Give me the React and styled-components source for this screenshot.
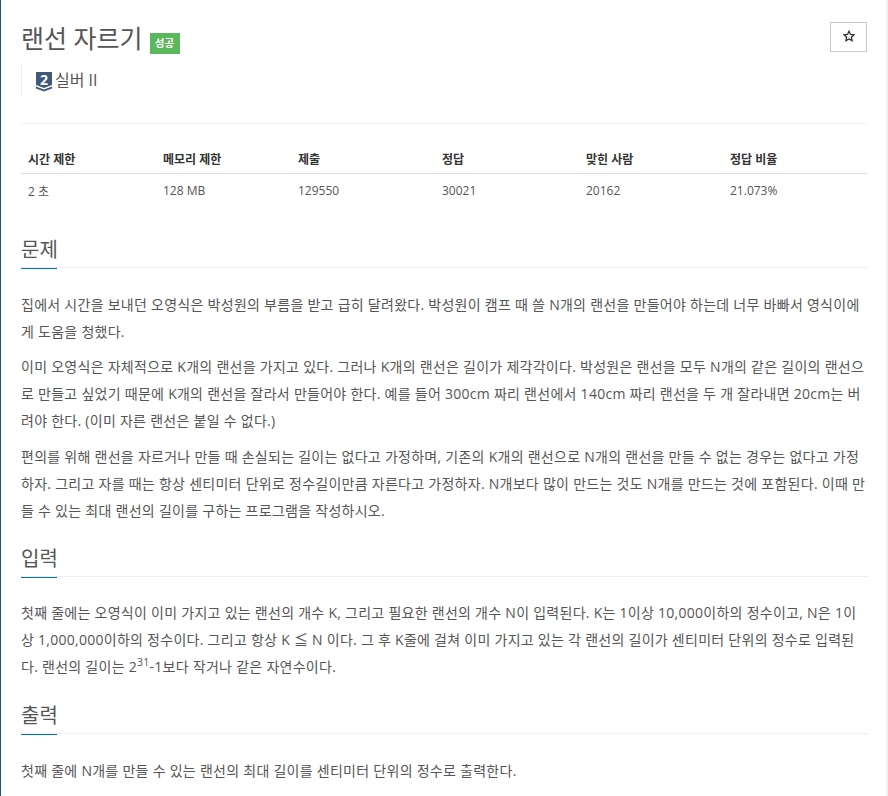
import React from 'react';
import styled, { createGlobalStyle } from 'styled-components';

const GlobalStyle = createGlobalStyle`
    html, body {
        margin: 0;
        padding: 0;
        background: #fff;
    }
    body {
        font-family: "Open Sans", "Noto Sans CJK KR", sans-serif;
        font-size: 14px;
        color: #555;
    }
`;

const Page = styled('div')`
    box-sizing: border-box;
    width: 888px;
    height: 796px;
    overflow: hidden;
    border-left: 1px solid #1a5a78;
    border-right: 2px solid #f1f1f1;
    padding: 0 19px 0 20px;
`;

const TitleRow = styled('div')`
    display: flex;
    justify-content: space-between;
    align-items: flex-start;
    padding-top: 22px;
`;

const TitleGroup = styled('div')`
    display: flex;
    align-items: flex-end;
`;

const Title = styled('h1')`
    margin: 0;
    font-size: 25px;
    line-height: 32px;
    font-weight: 400;
    color: #555;
`;

const Badge = styled('span')`
    display: block;
    width: 30px;
    height: 21px;
    margin: 0 0 0 7px;
    background: #5cb85c;
    color: #fff;
    font-size: 10.5px;
    font-weight: 700;
    line-height: 21px;
    text-align: center;
`;

const StarButton = styled('button')`
    box-sizing: border-box;
    display: flex;
    align-items: center;
    justify-content: center;
    width: 37px;
    height: 30px;
    padding: 0 0 2px;
    background: #fff;
    border: 1px solid #c9c9c9;
`;

const Tier = styled('div')`
    display: flex;
    align-items: center;
    gap: 3px;
    height: 34px;
    margin-top: 9px;
    padding-left: 14px;
    border-left: 1px solid #eee;
    font-size: 16px;
    line-height: 32px;
    color: #555;
    svg {
        margin-top: 3px;
    }
`;

const Divider = styled('hr')`
    margin: 26px 0 0;
    border: 0;
    border-top: 1px solid #eee;
`;

const Table = styled('table')`
    width: 100%;
    margin-top: 22px;
    border-collapse: collapse;
    table-layout: fixed;
    font-size: 12px;
    color: #555;
`;

const HeadCell = styled('th')`
    box-sizing: border-box;
    width: ${(props) => props.$width}px;
    height: 27px;
    padding: 0 7px;
    border-bottom: 1px solid #ddd;
    text-align: left;
    font-weight: 700;
    color: #333;
`;

const Cell = styled('td')`
    height: 34px;
    padding: 0 7px;
`;

const Section = styled('section')`
    margin-top: ${(props) => props.$top}px;
`;

const Heading = styled('h2')`
    position: relative;
    margin: 0;
    height: 31px;
    font-size: 20px;
    line-height: 28px;
    font-weight: 400;
    color: #555;
    border-bottom: 1px dotted #e0e0e0;
    &::after {
        content: '';
        position: absolute;
        left: 0;
        bottom: -2px;
        width: 36px;
        height: 1px;
        background: #0076c0;
    }
`;

const Body = styled('div')`
    padding-top: ${(props) => props.$top}px;
`;

const Paragraph = styled('p')`
    margin: 0;
    font-size: 14px;
    letter-spacing: 0.27px;
    line-height: 27px;
    color: #555;
    & + & {
        margin-top: 8.5px;
    }
`;

const Sup = styled('sup')`
    font-size: 10.5px;
    line-height: 0;
`;

const StarIcon = () => (
    <svg width="12" height="12" viewBox="0 0 24 24" fill="none" stroke="#333" strokeWidth="2.6" strokeLinejoin="miter">
        <path d="M12 2.5l2.9 6.4 6.9.8-5.1 4.7 1.4 6.9-6.1-3.5-6.1 3.5 1.4-6.9-5.1-4.7 6.9-.8z" />
    </svg>
);

const TierIcon = () => (
    <svg width="16" height="20" viewBox="0 0 16 20" overflow="visible">
        <path d="M0 0h16v13l-8 3-8-3z" fill="#3f5a78" />
        <path d="M0 14.5l8 3 8-3v2l-8 3-8-3z" fill="#3f5a78" />
        <text x="8" y="12.5" textAnchor="middle" fill="#fff" fontSize="14" fontWeight="700" fontFamily="Open Sans, sans-serif">2</text>
    </svg>
);

const columns = [
    ['시간 제한', '2 초', 135],
    ['메모리 제한', '128 MB', 135],
    ['제출', '129550', 144],
    ['정답', '30021', 144],
    ['맞힌 사람', '20162', 144],
    ['정답 비율', '21.073%', 144],
];

const App = () => {
    return (
        <Page>
            <GlobalStyle />
            <TitleRow>
                <TitleGroup>
                    <Title>랜선 자르기</Title>
                    <Badge>성공</Badge>
                </TitleGroup>
                <StarButton aria-label="즐겨찾기">
                    <StarIcon />
                </StarButton>
            </TitleRow>
            <Tier>
                <TierIcon />
                실버 II
            </Tier>
            <Divider />
            <Table>
                <thead>
                    <tr>
                        {columns.map(([head, , width]) => (
                            <HeadCell key={head} $width={width}>{head}</HeadCell>
                        ))}
                    </tr>
                </thead>
                <tbody>
                    <tr>
                        {columns.map(([head, value]) => (
                            <Cell key={head}>{value}</Cell>
                        ))}
                    </tr>
                </tbody>
            </Table>
            <Section $top={28}>
                <Heading>문제</Heading>
                <Body $top={23}>
                    <Paragraph>집에서 시간을 보내던 오영식은 박성원의 부름을 받고 급히 달려왔다. 박성원이 캠프 때 쓸 N개의 랜선을 만들어야 하는데 너무 바빠서 영식이에게 도움을 청했다.</Paragraph>
                    <Paragraph>이미 오영식은 자체적으로 K개의 랜선을 가지고 있다. 그러나 K개의 랜선은 길이가 제각각이다. 박성원은 랜선을 모두 N개의 같은 길이의 랜선으로 만들고 싶었기 때문에 K개의 랜선을 잘라서 만들어야 한다. 예를 들어 300cm 짜리 랜선에서 140cm 짜리 랜선을 두 개 잘라내면 20cm는 버려야 한다. (이미 자른 랜선은 붙일 수 없다.)</Paragraph>
                    <Paragraph>편의를 위해 랜선을 자르거나 만들 때 손실되는 길이는 없다고 가정하며, 기존의 K개의 랜선으로 N개의 랜선을 만들 수 없는 경우는 없다고 가정하자. 그리고 자를 때는 항상 센티미터 단위로 정수길이만큼 자른다고 가정하자. N개보다 많이 만드는 것도 N개를 만드는 것에 포함된다. 이때 만들 수 있는 최대 랜선의 길이를 구하는 프로그램을 작성하시오.</Paragraph>
                </Body>
            </Section>
            <Section $top={21}>
                <Heading>입력</Heading>
                <Body $top={22}>
                    <Paragraph>첫째 줄에는 오영식이 이미 가지고 있는 랜선의 개수 K, 그리고 필요한 랜선의 개수 N이 입력된다. K는 1이상 10,000이하의 정수이고, N은 1이상 1,000,000이하의 정수이다. 그리고 항상 K ≦ N 이다. 그 후 K줄에 걸쳐 이미 가지고 있는 각 랜선의 길이가 센티미터 단위의 정수로 입력된다. 랜선의 길이는 2<Sup>31</Sup>-1보다 작거나 같은 자연수이다.</Paragraph>
                </Body>
            </Section>
            <Section $top={22}>
                <Heading>출력</Heading>
                <Body $top={23}>
                    <Paragraph>첫째 줄에 N개를 만들 수 있는 랜선의 최대 길이를 센티미터 단위의 정수로 출력한다.</Paragraph>
                </Body>
            </Section>
        </Page>
    );
};

export default App;
